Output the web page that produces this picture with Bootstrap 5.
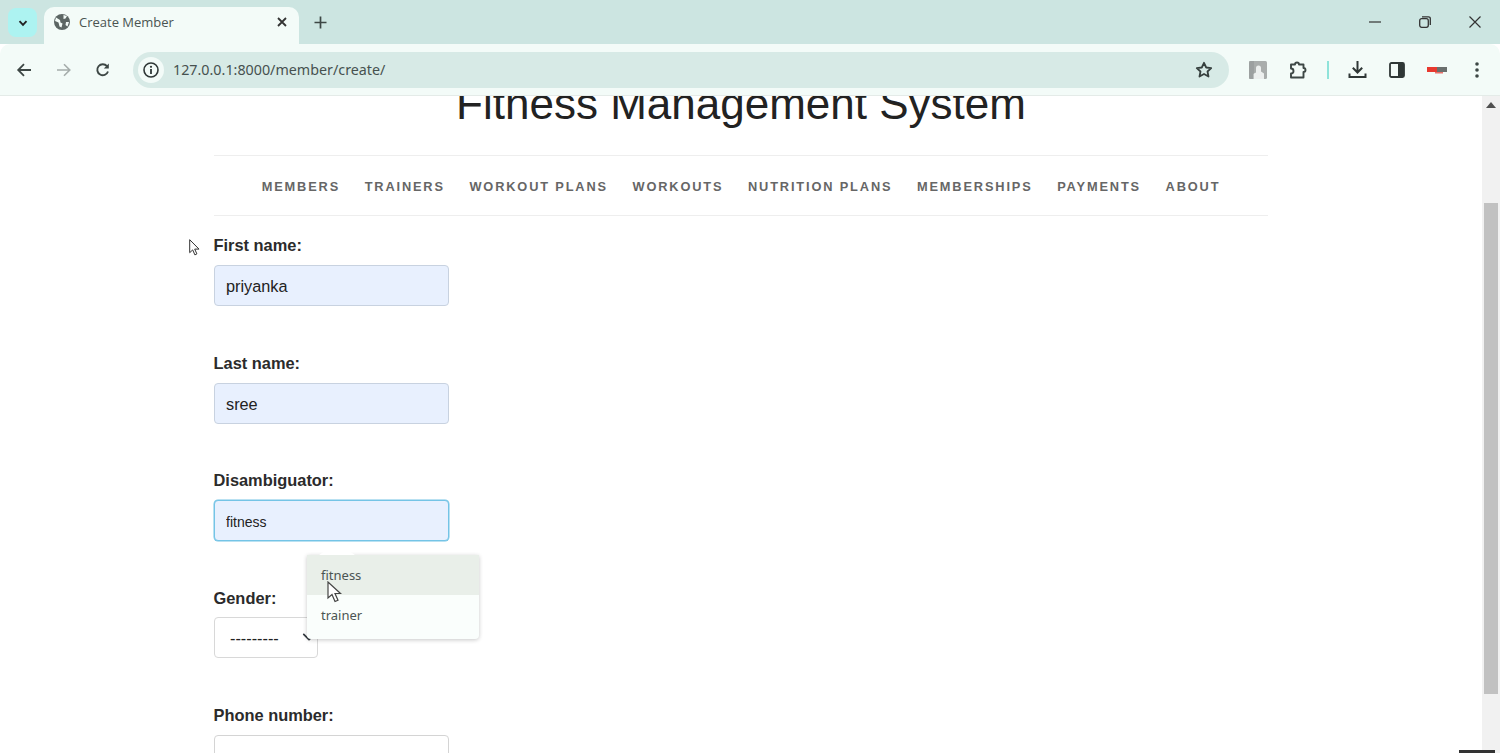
<!DOCTYPE html>
<html lang="en"><head><meta charset="utf-8"><title>Create Member</title>
<link href="https://cdn.jsdelivr.net/npm/bootstrap@5.3.0/dist/css/bootstrap.min.css" rel="stylesheet">
<style>
html,body{height:753px;overflow:hidden;margin:0}
body{font-family:"Liberation Sans",Arial,sans-serif;background:#fff;position:relative;color:#222}
svg{display:block;flex:none}
.tabstrip{height:44px;background:#cce5e1;padding-left:8px}
.tabdrop{width:29px;height:29px;margin-top:8px;border-radius:8px;background:#adf3f1;margin-right:7px}
.browsertab{width:255px;height:37px;margin-top:7px;background:#f3fbf8;border-radius:10px 10px 0 0;padding:0 10px 7px;font:13px "Open Sans","Liberation Sans",sans-serif;color:#4a5452}
.tabtitle{margin-left:9px}
.closetab{margin-right:1px}
.newtab{margin-left:15px;margin-top:7px;height:30px}
.winctl{width:50px;height:44px}
.toolbar{height:52px;background:#f3fbf8;border-bottom:1px solid #e4ebe8;border-radius:10px 10px 0 0;padding-left:16px}
.tbtn{width:20px;margin-right:19.5px}
.omnibox{width:1096px;height:36px;margin-left:-1.5px;background:#d7eae6;border-radius:18px;padding:0 16px 0 5px;font:14.3px "Noto Sans","Liberation Sans",sans-serif;color:#46514f}
.infodot{width:26px;height:26px;border-radius:50%;background:#f3fbf8;margin-right:9px}
.tright{margin-left:9px}
.tslot{width:40px}
.tsep{width:2px;height:18px;background:#8fe3da;margin:0 8px 0 9px}
.pagearea{height:657px;overflow:hidden}
.pagecontent{width:1482px}
.pagewrap{width:1054px;margin:0 auto}
.sitetitle{font-size:44px;font-weight:400;line-height:48px;text-align:center;margin:-16px 0 0;color:#222}
.sitenav{margin-top:27px;height:61px;border-top:1px solid #eee;border-bottom:1px solid #eee;gap:24.6px;padding-top:3px}
.sitenav .nav-link{padding:0;font-size:12.8px;font-weight:700;letter-spacing:1.85px;color:#666;text-transform:uppercase}
.entryform{margin-top:17px}
.fieldrow{height:117.5px}
.fieldrow .form-label{font-size:16.4px;font-weight:700;line-height:24px;margin-bottom:8px;color:#2b2b2b;display:block;height:24px;margin-left:-.5px}
.fieldrow .form-control{width:235px;height:41px;padding:2px 11px 0;font-size:16.300px;color:#222;border:1px solid #d4d4d4;border-radius:4px;background:#fff}
.fieldrow .form-control.autofilled{background:#e8f0fe;border-color:#c8d2e0}
.fieldrow .form-control.focusfield{background:#e8f0fe;border-color:#74c4e6;font-size:14px;box-shadow:0 0 0 .5px #74c4e6}
.fieldrow .form-select{width:104px;height:41px;margin-top:-1px;padding:2px 0 0 15px;font-size:16.300px;color:#222;border:1px solid #d8d8d8;border-radius:4px;background-position:right 1px center;background-size:14px}
.scrollcol{width:18px;background:#f1f1f1;height:657px;padding-top:6px}
.scrolltrack{height:101px}
.scrollthumb{width:14px;height:491px;background:#c1c1c1;margin:0 auto}
.suggest{position:absolute;left:307px;top:555px;width:172px;height:84px;background:#fafefc;border-radius:0 0 4px 4px;box-shadow:0 1px 4px rgba(0,0,0,.22);font:13px "Noto Sans","Liberation Sans",sans-serif;color:#4b5553}
.suggest::before{content:"";position:absolute;left:12px;top:-9px;width:36px;height:9px;background:#fff;clip-path:polygon(0 100%,38% 0,62% 0,100% 100%)}
.suggest-item{padding-left:14px}
.suggest-hi{height:40px;background:#e9efe9}
.suggest-lo{height:40px}
.cursorbig{position:absolute;left:327px;top:581px}
.cursorsmall{position:absolute;left:189px;top:239px}
.taskbit{position:absolute;left:1459px;top:750px;width:36px;height:3px;background:#333}
</style></head>
<body>
<div class="tabstrip d-flex align-items-start">
  <div class="tabdrop d-flex align-items-center justify-content-center"><svg width="12" height="12" viewBox="0 0 12 12"><path d="M2.5 4.2 6 7.8l3.5-3.6" fill="none" stroke="#222" stroke-width="1.9"/></svg></div>
  <div class="browsertab d-flex align-items-center">
    <svg width="16" height="16" viewBox="0 0 16 16"><circle cx="8" cy="8" r="8" fill="#5c6664"/><path d="M2 3.5 6 6l.5 2.5 2 1-1 4-2-1-1-4L1 7zM9.5 1l3.5 1-1.5 2.5-2 .5zM12 8h3l-1.5 4.5L11.500 11z" fill="#f3fbf8"/></svg>
    <span class="tabtitle">Create Member</span>
    <svg class="ms-auto closetab" width="12" height="12" viewBox="0 0 12 12"><path d="M2 2l8 8M10 2l-8 8" stroke="#333" stroke-width="1.8"/></svg>
  </div>
  <div class="newtab d-flex align-items-center"><svg width="13" height="13" viewBox="0 0 13 13"><path d="M6.500 0.500v12M.5 6.500h12" stroke="#3d4745" stroke-width="1.700"/></svg></div>
  <div class="ms-auto d-flex">
    <div class="winctl d-flex align-items-center justify-content-center"><svg width="12" height="12" viewBox="0 0 12 12"><path d="M0 6h12" stroke="#333" stroke-width="1.200"/></svg></div>
    <div class="winctl d-flex align-items-center justify-content-center"><svg width="12" height="12" viewBox="0 0 12 12"><rect x=".7" y="2.700" width="8.600" height="8.600" rx="2" fill="none" stroke="#333" stroke-width="1.300"/><path d="M3 .8h6.500a1.800 1.800 0 0 1 1.800 1.800V9" fill="none" stroke="#333" stroke-width="1.300"/></svg></div>
    <div class="winctl d-flex align-items-center justify-content-center"><svg width="12" height="12" viewBox="0 0 12 12"><path d="M.5.500l11 11M11.500.500l-11 11" stroke="#333" stroke-width="1.200"/></svg></div>
  </div>
</div>
<div class="toolbar d-flex align-items-center">
  <div class="tbtn"><svg width="16" height="14" viewBox="0 0 16 14"><path d="M15 7H2.500M8 1.200 2.200 7 8 12.800" fill="none" stroke="#3d4745" stroke-width="1.800"/></svg></div>
  <div class="tbtn"><svg width="16" height="14" viewBox="0 0 16 14"><path d="M1 7h12.500M8 1.200 13.800 7 8 12.800" fill="none" stroke="#a5adab" stroke-width="1.600"/></svg></div>
  <div class="tbtn"><svg width="16" height="16" viewBox="0 0 16 16"><path d="M13 9.500A5.500 5.500 0 1 1 12 4.200" fill="none" stroke="#3d4745" stroke-width="1.900"/><path d="M13.800 1.500v5h-5z" fill="#3d4745"/></svg></div>
  <div class="omnibox d-flex align-items-center">
    <div class="infodot d-flex align-items-center justify-content-center"><svg width="16" height="16" viewBox="0 0 16 16"><circle cx="8" cy="8" r="7" fill="none" stroke="#2f3736" stroke-width="1.600"/><path d="M8 7v5" stroke="#2f3736" stroke-width="1.800"/><circle cx="8" cy="4.800" r="1.100" fill="#2f3736"/></svg></div>
    <span>127.0.0.1:8000/member/create/</span>
    <svg class="ms-auto" width="18" height="18" viewBox="0 0 18 18"><path d="M9 1.800l2.200 4.700 5 .6-3.700 3.400 1 5L9 13l-4.500 2.500 1-5L1.800 7.100l5-.6z" fill="none" stroke="#36403e" stroke-width="1.800" stroke-linejoin="round"/></svg>
  </div>
  <div class="tright d-flex align-items-center">
    <div class="tslot d-flex justify-content-center"><svg width="18" height="18" viewBox="0 0 18 18"><rect width="18" height="18" rx="1.500" fill="#a9adac"/><path d="M4 18v-5l3-1.500V7a2.500 2.500 0 0 1 5 0v3.500l3 2V18z" fill="#ecefee"/><rect x="0" y="0" width="5" height="18" fill="#8f9493" opacity=".5"/></svg></div>
    <div class="tslot d-flex justify-content-center"><svg width="20" height="20" viewBox="0 0 20 20"><path d="M3 4.500h4a2 2 0 0 1 4 0h4.500V8a2 2 0 0 1 0 4v5.500H3V13.500a2.500 2.500 0 0 0 0-5z" fill="none" stroke="#3d4745" stroke-width="1.900" stroke-linejoin="round"/></svg></div>
    <div class="tsep"></div>
    <div class="tslot d-flex justify-content-center"><svg width="19" height="19" viewBox="0 0 19 19"><path d="M9.500 1v11M4.800 7.800l4.700 4.700 4.700-4.700" fill="none" stroke="#2f3736" stroke-width="2"/><path d="M1.500 13.500v3.500h16v-3.500" fill="none" stroke="#2f3736" stroke-width="2"/></svg></div>
    <div class="tslot d-flex justify-content-center"><svg width="16" height="16" viewBox="0 0 16 16"><rect x="1" y="1" width="14" height="14" rx="1.500" fill="#f3fbf8" stroke="#2f3736" stroke-width="1.800"/><rect x="9" y="1" width="6" height="14" fill="#2f3736"/></svg></div>
    <div class="tslot d-flex justify-content-center"><svg width="20" height="8" viewBox="0 0 20 8"><rect x="0" y="1" width="10" height="5" fill="#e8392f"/><rect x="10" y="1" width="10" height="5" fill="#6a6f6e"/><rect x="8" y="6" width="8" height="1.500" fill="#e8706a"/></svg></div>
    <div class="tslot d-flex justify-content-center"><svg width="4" height="16" viewBox="0 0 4 16"><circle cx="2" cy="2" r="1.800" fill="#3d4745"/><circle cx="2" cy="8" r="1.800" fill="#3d4745"/><circle cx="2" cy="14" r="1.800" fill="#3d4745"/></svg></div>
  </div>
</div>
<div class="pagearea d-flex">
  <div class="pagecontent">
    <div class="pagewrap">
      <h1 class="sitetitle">Fitness Management System</h1>
      <nav class="nav sitenav justify-content-center align-items-center">
        <a class="nav-link" href="#">Members</a>
        <a class="nav-link" href="#">Trainers</a>
        <a class="nav-link" href="#">Workout Plans</a>
        <a class="nav-link" href="#">Workouts</a>
        <a class="nav-link" href="#">Nutrition Plans</a>
        <a class="nav-link" href="#">Memberships</a>
        <a class="nav-link" href="#">Payments</a>
        <a class="nav-link" href="#">About</a>
      </nav>
      <form class="entryform">
        <div class="fieldrow"><label class="form-label" for="f1">First name:</label><input id="f1" class="form-control autofilled" value="priyanka"></div>
        <div class="fieldrow"><label class="form-label" for="f2">Last name:</label><input id="f2" class="form-control autofilled" value="sree"></div>
        <div class="fieldrow"><label class="form-label" for="f3">Disambiguator:</label><input id="f3" class="form-control focusfield" value="fitness"></div>
        <div class="fieldrow"><label class="form-label" for="f4">Gender:</label><select id="f4" class="form-select"><option>---------</option></select></div>
        <div class="fieldrow"><label class="form-label" for="f5">Phone number:</label><input id="f5" class="form-control"></div>
      </form>
    </div>
  </div>
  <div class="scrollcol">
    <div class="scrolltrack"><svg class="mx-auto" width="10" height="6" viewBox="0 0 10 6"><path d="M5 0l5 6H0z" fill="#505050"/></svg></div>
    <div class="scrollthumb"></div>
  </div>
</div>
<div class="suggest">
  <div class="suggest-item suggest-hi d-flex align-items-center">fitness</div>
  <div class="suggest-item suggest-lo d-flex align-items-center">trainer</div>
</div>
<svg class="cursorbig" width="15" height="22" viewBox="0 0 15 22"><path d="M1 1v16l4-3.500 3 7 3-1.300-3-6.700h5.500z" fill="#fff" stroke="#444" stroke-width="1.200"/></svg>
<svg class="cursorsmall" width="11" height="17" viewBox="0 0 11 17"><path d="M.7.700v13l3-2.800 2.200 5 2-1-2.200-4.800h4.300z" fill="#fff" stroke="#333"/></svg>
<div class="taskbit"></div>
<script src="https://cdn.jsdelivr.net/npm/bootstrap@5.3.0/dist/js/bootstrap.bundle.min.js"></script>
</body></html>
